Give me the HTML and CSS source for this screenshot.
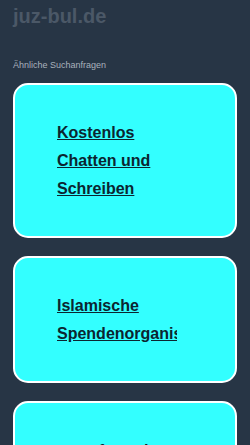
FILE: index.html
```html
<!DOCTYPE html>
<html lang="de">
<head>
    <meta charset="UTF-8">
    <meta name="viewport" content="width=device-width, initial-scale=1.0">
    <title>juz-bul.de</title>
    <link rel="stylesheet" href="styles.css">
</head>
<body>
    <div class="page">
        <h1 class="domain">juz-bul.de</h1>
        <p class="related">Ähnliche Suchanfragen</p>

        <div class="card">
            <div class="card-text"><a href="#">Kostenlos Chatten und Schreiben</a></div>
        </div>
        <div class="card">
            <div class="card-text"><a href="#">Islamische Spendenorganisationen</a></div>
        </div>
        <div class="card">
            <div class="card-text"><a href="#">neue freunde finden</a></div>
        </div>
    </div>
</body>
</html>
```

FILE: styles.css
```css
body {
    font-family: "Liberation Sans", Arial, sans-serif;
    background-color: #273545;
    margin: 0;
}

.page {
    padding: 5px 13px 20px;
}

.domain {
    margin: 0;
    font-size: 20px;
    line-height: 23px;
    font-weight: bold;
    color: #4b5867;
}

.related {
    margin: 32px 0 13px;
    font-size: 9px;
    line-height: 10px;
    color: #a9b2bc;
}

.card {
    background-color: #33ffff;
    border: 2px solid #fff;
    border-radius: 15px;
    padding: 34px 58px 33px 42px;
    margin-bottom: 18px;
}

.card-text {
    width: 120px;
    overflow: hidden;
    font-size: 16px;
    line-height: 28px;
    font-weight: bold;
}

.card-text a {
    color: #0b2530;
    text-decoration: underline;
}
```
